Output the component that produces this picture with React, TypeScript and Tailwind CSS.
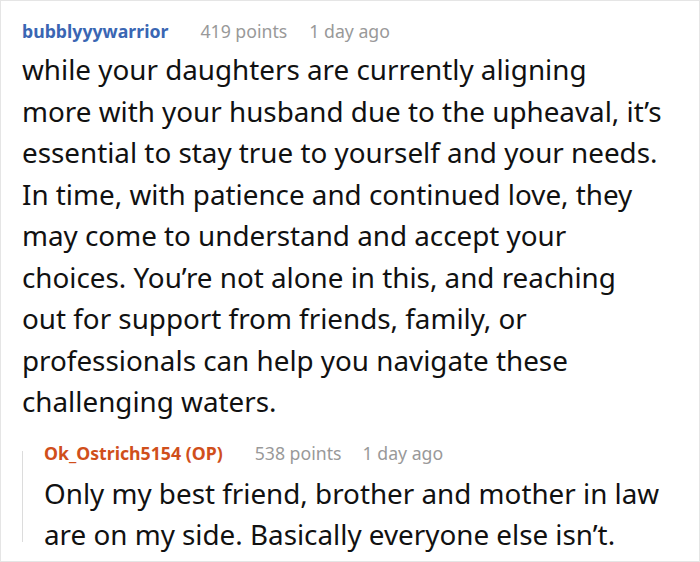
import React from "react";

const main = [
  "while your daughters are currently aligning",
  "more with your husband due to the upheaval, it\u2019s",
  "essential to stay true to yourself and your needs.",
  "In time, with patience and continued love, they",
  "may come to understand and accept your",
  "choices. You\u2019re not alone in this, and reaching",
  "out for support from friends, family, or",
  "professionals can help you navigate these",
  "challenging waters.",
];

const reply = [
  "Only my best friend, brother and mother in law",
  "are on my side. Basically everyone else isn\u2019t.",
];

export default function App() {
  return (
    <div
      className="w-[700px] h-[562px] bg-white border border-[#e5e5e5] overflow-hidden"
      style={{ fontFamily: '"Noto Sans", "Open Sans", sans-serif' }}
    >
      <div className="pl-[21px] pt-[17px]">
        <div className="flex items-baseline text-[17.7px] leading-[26px]">
          <span className="font-bold text-[#3a66b3]">bubblyyywarrior</span>
          <span className="ml-[32px] text-[#999999]">419 points</span>
          <span className="ml-[22px] text-[#999999]">1 day ago</span>
        </div>
        <div className="mt-[5px] text-[27.8px] leading-[41.5px] text-[#111111]">
          {main.map((l, i) => (
            <div key={i} className="whitespace-nowrap">
              {l}
            </div>
          ))}
        </div>
        <div className="mt-[17px] flex">
          <div className="w-px h-[91px] mt-[11px] bg-[#dcdcdc] shrink-0" />
          <div className="pl-[21px]">
            <div className="flex items-baseline text-[17.7px] leading-[26px]">
              <span className="font-bold text-[#d04f1b]">Ok_Ostrich5154 (OP)</span>
              <span className="ml-[32px] text-[#999999]">538 points</span>
              <span className="ml-[21px] text-[#999999]">1 day ago</span>
            </div>
            <div className="mt-[7px] text-[27.8px] leading-[41.5px] text-[#111111]">
              {reply.map((l, i) => (
                <div key={i} className="whitespace-nowrap">
                  {l}
                </div>
              ))}
            </div>
          </div>
        </div>
      </div>
    </div>
  );
}
